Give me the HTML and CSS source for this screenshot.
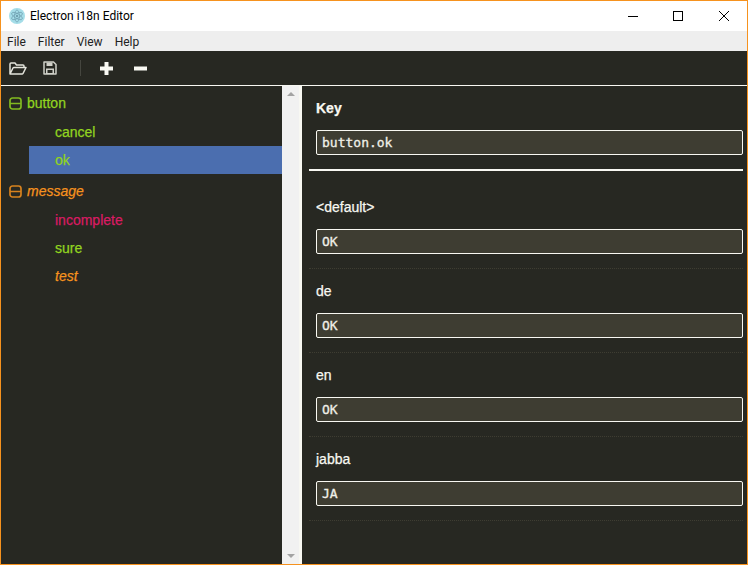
FILE: index.html
```html
<!DOCTYPE html>
<html lang="en">
<head>
<meta charset="utf-8">
<title>Electron i18n Editor</title>
<link rel="stylesheet" href="styles.css">
</head>
<body>
<div class="window">
  <header class="titlebar">
    <svg class="app-icon" width="16" height="16" viewBox="0 0 16 16">
      <circle cx="8" cy="8" r="8" fill="#a5dde8"/>
      <g fill="none" stroke="#6f9fb0" stroke-width="0.7">
        <ellipse cx="8" cy="8" rx="6" ry="2.4" transform="rotate(30 8 8)"/>
        <ellipse cx="8" cy="8" rx="6" ry="2.4" transform="rotate(90 8 8)"/>
        <ellipse cx="8" cy="8" rx="6" ry="2.4" transform="rotate(150 8 8)"/>
      </g>
      <circle cx="8" cy="8" r="1.2" fill="#6f9fb0"/>
    </svg>
    <span class="title">Electron i18n Editor</span>
    <div class="win-buttons">
      <svg class="win-btn" width="12" height="12" viewBox="0 0 12 12"><path d="M1 6.5h10" stroke="#000" fill="none"/></svg>
      <svg class="win-btn" width="12" height="12" viewBox="0 0 12 12"><rect x="1.5" y="1.5" width="9" height="9" stroke="#000" fill="none"/></svg>
      <svg class="win-btn win-close" width="12" height="12" viewBox="0 0 12 12"><path d="M1 1l10 10M11 1L1 11" stroke="#000" fill="none"/></svg>
    </div>
  </header>
  <nav class="menubar">
    <span>File</span><span>Filter</span><span>View</span><span>Help</span>
  </nav>
  <div class="toolbar">
    <svg class="tool tool-open" width="18" height="13" viewBox="0 0 18 13">
      <path d="M1 12V2a1 1 0 0 1 1-1h4l1.500 2H14a1 1 0 0 1 1 1v1.500M1 12L4 6a1 1 0 0 1 .9-.5H17l-3 6a1 1 0 0 1-.9.5H1z" fill="none" stroke="#e4e4dc" stroke-width="1.500" stroke-linejoin="round"/>
    </svg>
    <svg class="tool tool-save" width="14" height="14" viewBox="0 0 14 14">
      <path d="M1 1h9.500L13 3.500V13H1z" fill="none" stroke="#d0d0c8" stroke-width="1.500" stroke-linejoin="round"/>
      <path d="M3.500 1.500h6V5h-6zM3 7.500h8V13H3z" fill="#d0d0c8"/>
      <rect x="4.500" y="9" width="5" height="3" fill="#272822"/>
    </svg>
    <span class="tool-sep"></span>
    <svg class="tool tool-plus" width="13" height="13" viewBox="0 0 13 13"><path d="M4.500 0h4v4.500H13v4H8.500V13h-4V8.500H0v-4h4.500z" fill="#f8f8f2"/></svg>
    <svg class="tool tool-minus" width="13" height="13" viewBox="0 0 13 13"><path d="M0 4.500h13v4H0z" fill="#f8f8f2"/></svg>
  </div>
  <main class="content">
    <aside class="tree">
      <div class="group green">
        <svg class="toggle" width="13" height="13" viewBox="0 0 13 13"><rect x="1" y="1" width="11" height="11" rx="2.500" fill="none" stroke="currentColor" stroke-width="1.700"/><path d="M1 6.500h11" stroke="currentColor" stroke-width="1.500"/></svg>
        <span>button</span>
      </div>
      <div class="leaf green">cancel</div>
      <div class="leaf green selected">ok</div>
      <div class="group orange italic">
        <svg class="toggle" width="13" height="13" viewBox="0 0 13 13"><rect x="1" y="1" width="11" height="11" rx="2.500" fill="none" stroke="currentColor" stroke-width="1.700"/><path d="M1 6.500h11" stroke="currentColor" stroke-width="1.500"/></svg>
        <span>message</span>
      </div>
      <div class="leaf pink">incomplete</div>
      <div class="leaf green">sure</div>
      <div class="leaf orange italic">test</div>
    </aside>
    <div class="scrollbar">
      <span class="arrow up"></span>
      <span class="arrow down"></span>
    </div>
    <section class="editor">
      <div class="key-block">
        <label class="label key-label">Key</label>
        <div class="field">button.ok</div>
      </div>
      <div class="entry"><label class="label">&lt;default&gt;</label><div class="field">OK</div></div>
      <div class="entry"><label class="label">de</label><div class="field">OK</div></div>
      <div class="entry"><label class="label">en</label><div class="field">OK</div></div>
      <div class="entry"><label class="label">jabba</label><div class="field">JA</div></div>
    </section>
  </main>
</div>
</body>
</html>
```
FILE: styles.css
```css
* { box-sizing: border-box; }
html, body { margin: 0; height: 100%; overflow: hidden; }
body { font-family: "Liberation Sans", Arial, sans-serif; }
.window {
  width: 748px; height: 565px;
  border: 1px solid #f6921e;
  display: flex; flex-direction: column;
  background: #272822;
}
.titlebar {
  height: 30px; flex: none; background: #fff;
  display: flex; align-items: center;
  padding-left: 8px;
}
.app-icon { flex: none; }
.title {
  margin-left: 5px;
  font: 12px Roboto, "Noto Sans", sans-serif;
  color: #000;
}
.win-buttons { margin-left: auto; display: flex; align-items: center; padding-right: 17px; gap: 33px; }
.win-btn { display: block; }
.win-close { margin-left: 1px; }
.menubar {
  height: 20px; flex: none; background: #eeeeee;
  display: flex; align-items: center;
  padding: 1px 0 0 6px; gap: 12px;
  font: 12px Roboto, "Noto Sans", sans-serif;
  color: #222;
}
.toolbar {
  height: 34px; flex: none;
  background: #272822;
  display: flex; align-items: center;
  padding-left: 8px;
}
.tool { display: block; flex: none; }
.tool-save { margin-left: 16px; }
.tool-sep { width: 1px; height: 16px; background: #45463f; margin: 0 19px 0 23px; }
.tool-minus { margin-left: 21px; }
.content {
  flex: 1; min-height: 0;
  display: flex;
  border-top: 1px solid #f8f8f2;
}
.tree {
  width: 281px; flex: none;
  padding-top: 3px;
  font-size: 14px;
  -webkit-text-stroke: 0.25px currentColor;
}
.group {
  height: 28px;
  display: flex; align-items: center;
  padding-left: 8px; gap: 5px;
}
.leaf {
  height: 28px; line-height: 28px;
  margin-left: 28px; padding-left: 26px;
}
.selected { background: #4b6eaf; }
.group + .leaf { margin-top: 1px; }
.leaf + .group { margin-top: 3px; }
.toggle { display: block; flex: none; opacity: 0.85; }
.green { color: #92d420; }
.orange { color: #f6921e; }
.pink { color: #d91b63; }
.italic { font-style: italic; }
.scrollbar {
  width: 17px; flex: none; background: #f1f1f1;
  display: flex; flex-direction: column;
  justify-content: space-between; align-items: center;
  padding: 6px 0;
}
.arrow { width: 0; height: 0; border-left: 4px solid transparent; border-right: 4px solid transparent; }
.up { border-bottom: 4px solid #a3a3a3; }
.down { border-top: 4px solid #a3a3a3; }
.editor {
  flex: 1; min-width: 0;
  border-left: 3px solid #f8f8f2;
  padding: 0 4px 0 7px;
}
.key-block {
  padding: 12px 0 14px 7px;
  border-bottom: 2px solid #f8f8f2;
}
.label {
  display: block;
  font-size: 14px; line-height: 20px;
  color: #f8f8f2;
  -webkit-text-stroke: 0.25px currentColor;
}
.key-label { font-weight: bold; margin-bottom: 12px; }
.field {
  height: 25px;
  border: 1px solid #f8f8f2; border-radius: 2px;
  background: #3e3d32;
  color: #f0f0e8;
  font: 13px/23px "DejaVu Sans Mono", monospace;
  -webkit-text-stroke: 0.3px currentColor;
  padding-left: 5px;
}
.entry {
  padding: 12px 0 14px 7px;
  height: 84px;
  border-bottom: 1px dotted #3e3d32;
}
.entry:nth-child(2) { height: 98px; padding-top: 26px; }
.entry .label { margin-bottom: 12px; }
```
